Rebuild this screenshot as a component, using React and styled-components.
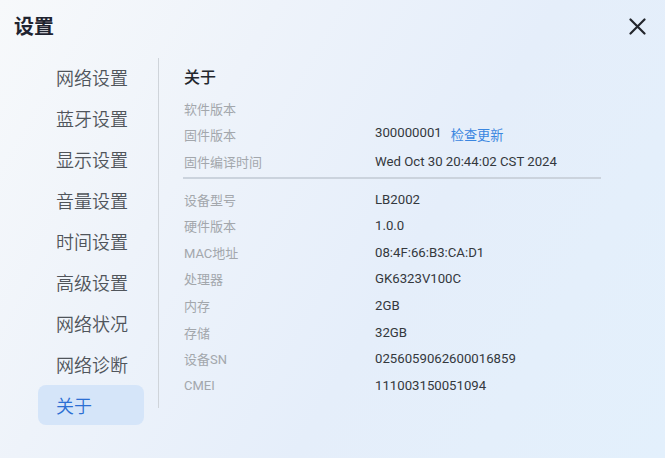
import React from "react";
import styled, { createGlobalStyle } from "styled-components";

const Global = createGlobalStyle`
  html, body { margin: 0; padding: 0; }
  body { font-family: Roboto, "Noto Sans CJK SC", sans-serif; }
`;

const Dialog = styled.div`
  width: 665px;
  height: 458px;
  box-sizing: border-box;
  overflow: hidden;
  background: linear-gradient(120deg, #f7f9fb 0%, #eef3fa 30%, #e5eefa 60%, #e3f0fc 100%);
  display: flex;
  flex-direction: column;
  position: relative;
`;

const Header = styled.div`
  height: 57px;
  display: flex;
  align-items: center;
  justify-content: space-between;
  padding: 0 18px 6px 14px;
  box-sizing: border-box;
`;

const Title = styled.div`
  font-family: "Noto Sans CJK SC", sans-serif;
  font-size: 20px;
  font-weight: 600;
  color: #1f2430;
  line-height: 24px;
`;

const Close = styled.button`
  border: 0;
  background: transparent;
  padding: 0;
  width: 20px;
  height: 20px;
  display: flex;
  align-items: center;
  justify-content: center;
  margin-top: 2px;
`;

const Body = styled.div`
  display: flex;
  flex: 1;
`;

const Sidebar = styled.nav`
  width: 120px;
  padding-left: 38px;
  display: flex;
  flex-direction: column;
  gap: 1px;
`;

const NavItem = styled.div`
  height: 40px;
  width: 106px;
  box-sizing: border-box;
  padding-left: 18px;
  display: flex;
  align-items: center;
  font-family: "Noto Sans CJK SC", sans-serif;
  font-size: 18px;
  font-weight: 350;
  border-radius: 8px;
  color: ${(p) => (p.$active ? "#2c6fd3" : "#50555b")};
  background: ${(p) => (p.$active ? "#d5e5f9" : "transparent")};
`;

const Divider = styled.div`
  width: 1px;
  height: 350px;
  background: #cfd4da;
  margin-top: 1px;
`;

const Content = styled.section`
  padding: 7px 0 0 25px;
  width: 417px;
`;

const SectionTitle = styled.div`
  font-family: "Noto Sans CJK SC", sans-serif;
  font-size: 16px;
  font-weight: 500;
  color: #23272d;
  line-height: 24px;
  margin-bottom: 7px;
`;

const Grid = styled.div`
  display: grid;
  grid-template-columns: 191px auto;
  grid-auto-rows: 26.6px;
  align-items: center;
`;

const Label = styled.div`
  font-size: 13px;
  font-weight: 400;
  color: #a3a7ac;
  font-family: Roboto, "Noto Sans CJK SC", sans-serif;
`;

const Value = styled.div`
  font-size: 13.2px;
  color: #34383d;
  font-family: Roboto, "Noto Sans CJK SC", sans-serif;
  display: flex;
  gap: 9px;
`;

const Link = styled.span`
  color: #3a86e0;
  font-family: "Noto Sans CJK SC", sans-serif;
`;

const Rule = styled.hr`
  border: 0;
  height: 2px;
  background: #cbd3dd;
  margin: 2px 0 7px -1px;
  width: 418px;
`;

const nav = ["网络设置", "蓝牙设置", "显示设置", "音量设置", "时间设置", "高级设置", "网络状况", "网络诊断", "关于"];

const rows1 = [
  ["软件版本", ""],
  ["固件版本", "300000001", true],
  ["固件编译时间", "Wed Oct 30 20:44:02 CST 2024"],
];
const rows2 = [
  ["设备型号", "LB2002"],
  ["硬件版本", "1.0.0"],
  ["MAC地址", "08:4F:66:B3:CA:D1"],
  ["处理器", "GK6323V100C"],
  ["内存", "2GB"],
  ["存储", "32GB"],
  ["设备SN", "0256059062600016859"],
  ["CMEI", "111003150051094"],
];

const Rows = ({ rows }) => (
  <Grid>
    {rows.map(([l, v, link]) => (
      <React.Fragment key={l}>
        <Label>{l}</Label>
        <Value>
          {v}
          {link && <Link>检查更新</Link>}
        </Value>
      </React.Fragment>
    ))}
  </Grid>
);

export default function App() {
  return (
    <>
      <Global />
      <Dialog>
        <Header>
          <Title>设置</Title>
          <Close aria-label="关闭">
            <svg width="17" height="17" viewBox="0 0 17 17">
              <path d="M1.5 1.5 L15.5 15.5 M15.5 1.5 L1.5 15.5" stroke="#23262c" strokeWidth="2.2" strokeLinecap="round" />
            </svg>
          </Close>
        </Header>
        <Body>
          <Sidebar>
            {nav.map((n) => (
              <NavItem key={n} $active={n === "关于"}>{n}</NavItem>
            ))}
          </Sidebar>
          <Divider />
          <Content>
            <SectionTitle>关于</SectionTitle>
            <Rows rows={rows1} />
            <Rule />
            <Rows rows={rows2} />
          </Content>
        </Body>
      </Dialog>
    </>
  );
}
